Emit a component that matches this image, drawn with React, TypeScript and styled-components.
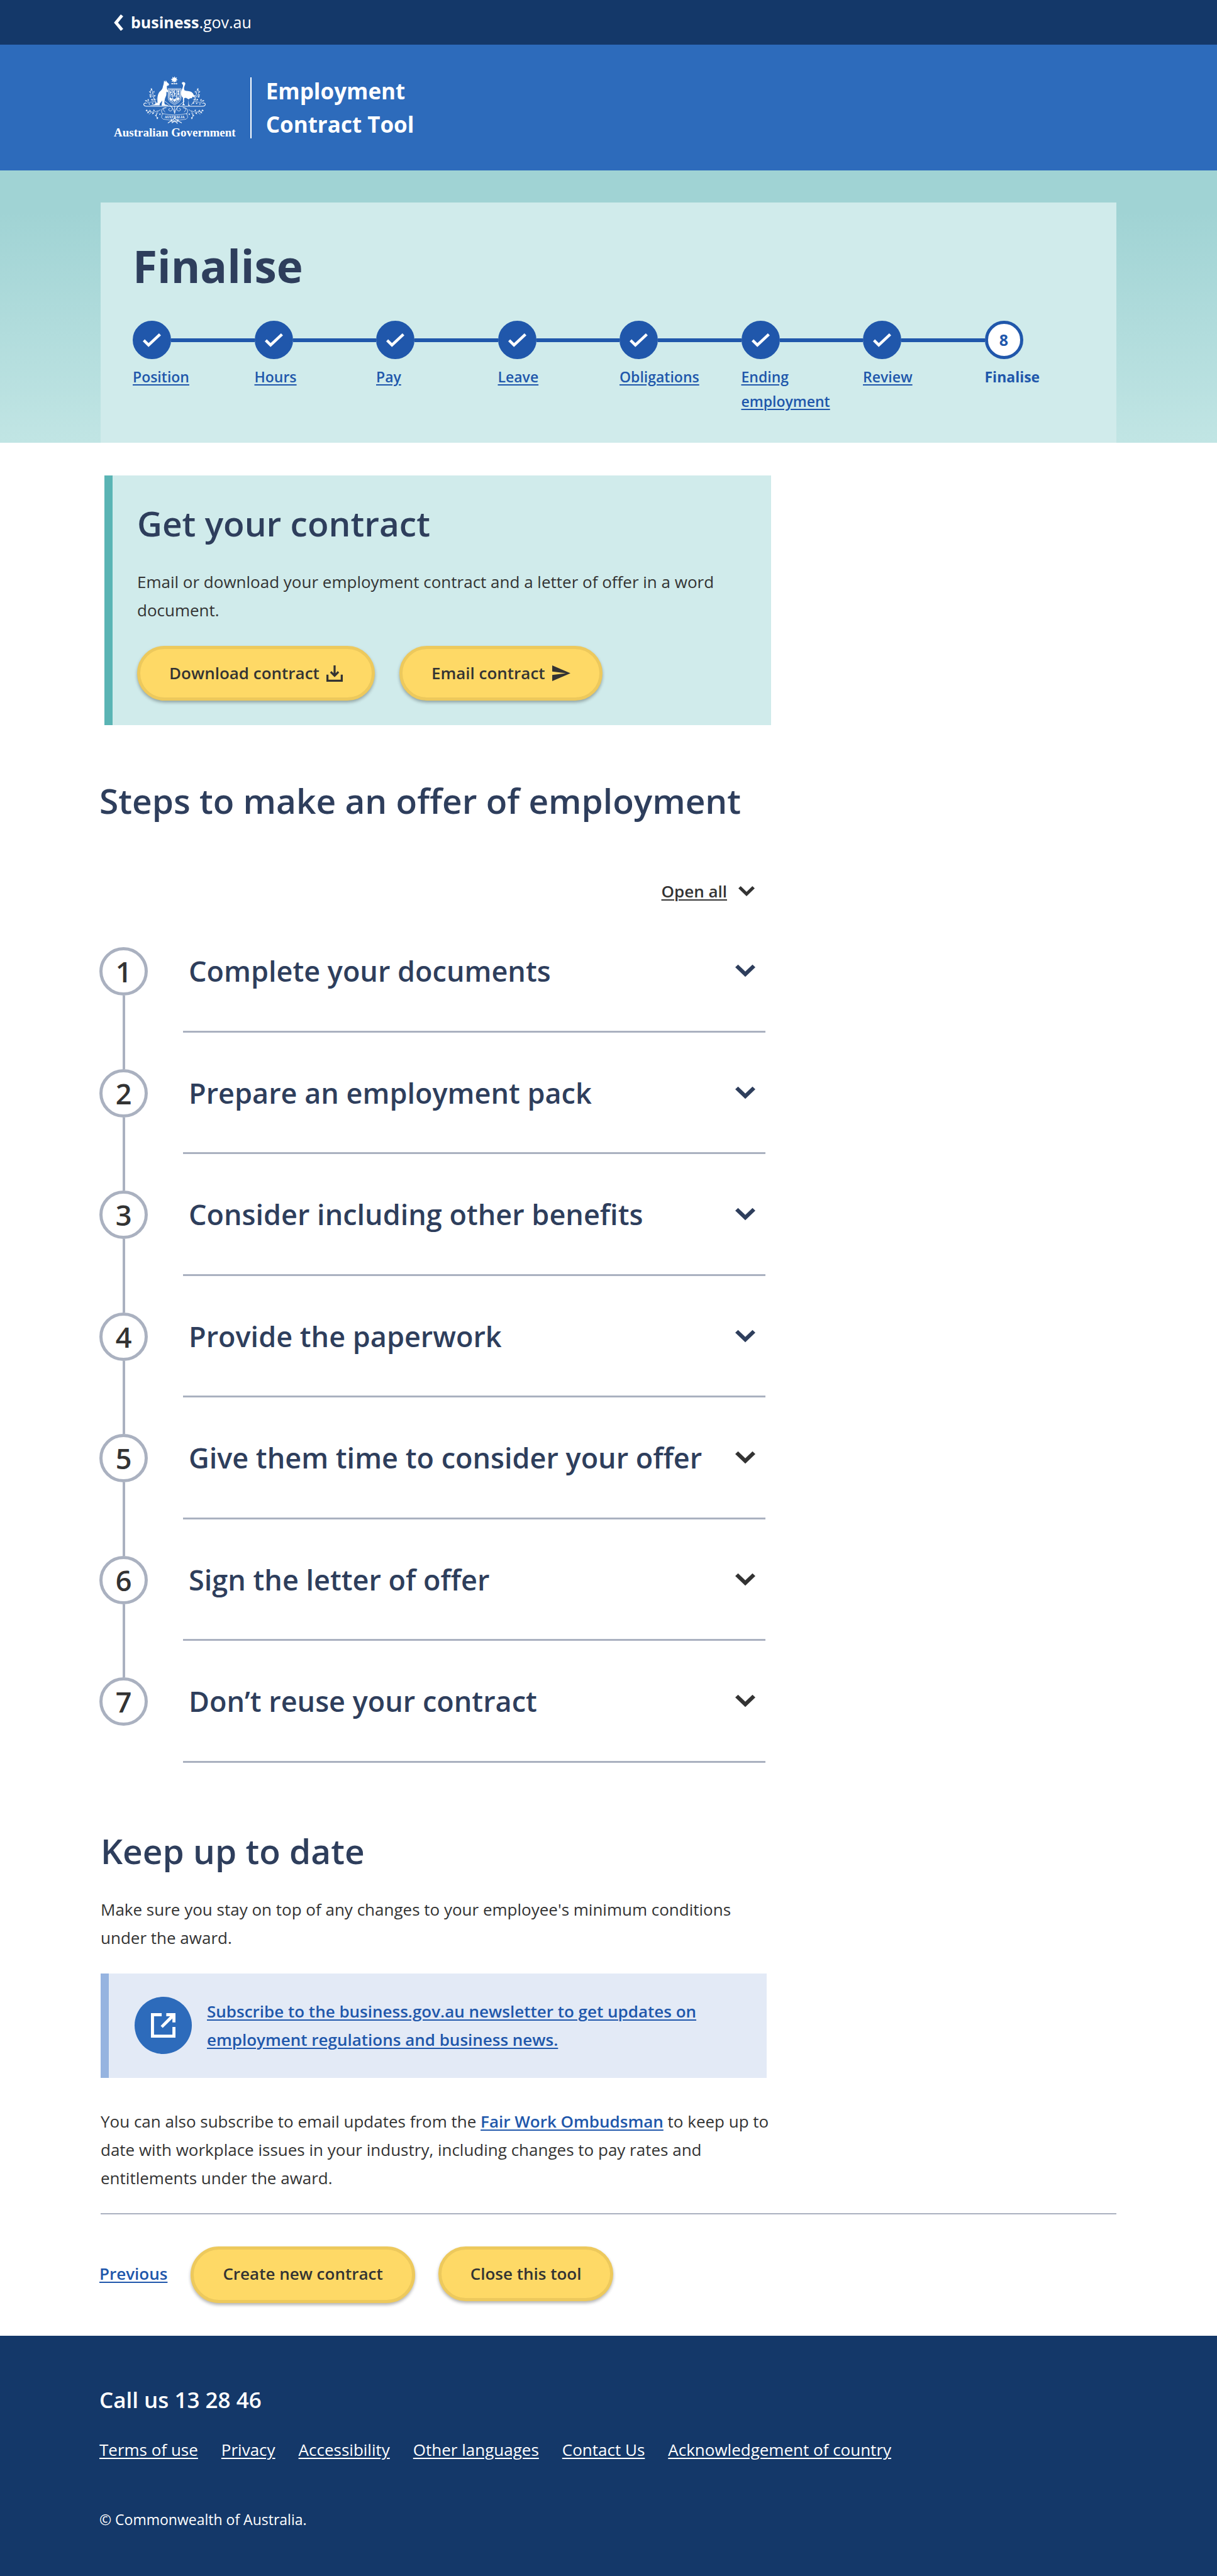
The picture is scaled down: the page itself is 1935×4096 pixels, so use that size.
import React, { useState } from "react";
import styled, { createGlobalStyle, css } from "styled-components";

const c = {
  navy: "#143869",
  blue: "#2d6bbb",
  link: "#2057ab",
  heading: "#2e3e5c",
  text: "#333333",
  mint: "#d0ebeb",
  teal: "#5ab4b4",
  grey: "#aab1c0",
  yellow: "#fed966",
  yellowEdge: "#edc95c",
  sky: "#e3eaf6",
  skyEdge: "#96b4e0",
};

const Global = createGlobalStyle`
  *, *::before, *::after { box-sizing: border-box; }
  body {
    margin: 0;
    background: #ffffff;
    color: ${c.text};
    font-family: "Open Sans", "Noto Sans", sans-serif;
    font-size: 26px;
    line-height: 45px;
  }
  h1, h2, p, ol, ul { margin: 0; padding: 0; }
  ol, ul { list-style: none; }
  button { font: inherit; color: inherit; cursor: pointer; }
  svg { display: block; flex: none; }
`;

const underline = css`
  text-decoration: underline;
  text-decoration-thickness: 2px;
  text-underline-offset: 3px;
`;

/* Header */

const TopBar = styled.nav`
  background: ${c.navy};
  height: 71px;
  padding: 0 181px;
  display: flex;
  align-items: center;
`;

const HomeLink = styled.a`
  display: flex;
  align-items: center;
  gap: 12px;
  color: #ffffff;
  font-size: 25px;
  text-decoration: none;
  strong { font-weight: 700; }
`;

const Banner = styled.header`
  background: ${c.blue};
  height: 200px;
  padding: 0 181px;
  display: flex;
  align-items: center;
  color: #ffffff;
`;

const Logo = styled.div`
  display: flex;
  flex-direction: column;
  align-items: center;
  font-family: "Liberation Serif", serif;
  font-weight: 700;
  font-size: 19px;
  line-height: 25px;
  white-space: nowrap;
`;

const Divider = styled.div`
  width: 2px;
  height: 97px;
  margin: 0 23px;
  background: #ffffff;
`;

const ToolName = styled.p`
  font-size: 35px;
  line-height: 53px;
  font-weight: 700;
`;

/* Progress */

const Hero = styled.section`
  padding: 51px 160px 0;
  background: linear-gradient(180deg, #a0d3d4 0%, #a0d3d4 15%, #c1e5e4 100%);
`;

const Panel = styled.div`
  background: ${c.mint};
  padding: 52px 16px 46px 51px;
`;

const PageTitle = styled.h1`
  color: ${c.heading};
  font-size: 71px;
  line-height: 97px;
  font-weight: 700;
`;

const Progress = styled.ol`
  display: grid;
  grid-template-columns: repeat(8, 1fr);
  margin-top: 39px;
`;

const ProgressItem = styled.li`
  display: flex;
  flex-direction: column;
  gap: 9px;
  color: ${c.link};
  font-size: 23px;
  line-height: 39px;
`;

const Track = styled.div`
  display: flex;
  align-items: center;
  &::after {
    content: "";
    flex: 1;
    height: 6px;
    background: ${c.link};
  }
  li:last-child > &::after { display: none; }
`;

const Dot = styled.span<{ $current?: boolean }>`
  width: 61px;
  height: 61px;
  border-radius: 50%;
  border: 5px solid ${c.link};
  background: ${(p) => (p.$current ? "#ffffff" : c.link)};
  display: flex;
  align-items: center;
  justify-content: center;
  font-size: 25px;
  font-weight: 700;
`;

const ProgressLink = styled.a`
  ${underline}
  width: min-content;
  color: inherit;
  font-weight: 600;
`;

const CurrentLabel = styled.span`
  font-weight: 700;
`;

/* Content */

const Main = styled.main`
  padding: 52px 160px 52px 158px;
`;

const Column = styled.div`
  max-width: 1068px;
`;

const Heading = styled.h2`
  color: ${c.heading};
  font-size: 55px;
  line-height: 74px;
  font-weight: 600;
`;

const Card = styled.section`
  margin-left: 8px;
  padding: 39px;
  background: ${c.mint};
  border-left: 13px solid ${c.teal};
`;

const Lead = styled.p`
  margin: 34px 0;
`;

const ButtonRow = styled.div`
  display: flex;
  gap: 39px;
`;

const Pill = styled.button<{ $tall?: boolean }>`
  display: flex;
  align-items: center;
  gap: 11px;
  padding: 16px 46px ${(p) => (p.$tall ? 19 : 16)}px;
  border: 5px solid ${c.yellowEdge};
  border-radius: 45px;
  background: ${c.yellow};
  box-shadow: 0 3px 5px rgba(0, 0, 0, 0.3);
  font-weight: 600;
`;

const StepsSection = styled.section`
  margin-top: 83px;
  width: 1059px;
  max-width: 100%;
`;

const OpenAll = styled.button`
  display: flex;
  align-items: center;
  gap: 18px;
  margin: 85px 17px 8px auto;
  padding: 0;
  border: 0;
  background: none;
  font-weight: 600;
  span { ${underline} }
`;

const StepList = styled.ol`
  display: grid;
  grid-auto-rows: 1fr;
  min-height: 1355px;
`;

const Step = styled.li`
  display: grid;
  grid-template-columns: 77px 1fr;
  column-gap: 56px;
`;

const Rail = styled.div`
  display: flex;
  flex-direction: column;
  align-items: center;
  &::before, &::after {
    content: "";
    width: 4px;
    background: ${c.grey};
  }
  &::before { height: 58px; }
  &::after { flex: 1; }
  li:first-child > &::before, li:last-child > &::after { background: none; }
`;

const StepNumber = styled.span`
  width: 77px;
  height: 77px;
  border: 5px solid ${c.grey};
  border-radius: 50%;
  display: flex;
  align-items: center;
  justify-content: center;
  font-size: 45px;
  font-weight: 600;
`;

const StepButton = styled.button<{ $arrow: string }>`
  display: flex;
  align-items: flex-start;
  justify-content: space-between;
  padding: 58px 16px 0 9px;
  border: 0;
  border-bottom: 3px solid ${c.grey};
  background: none;
  text-align: left;
  font-size: 45px;
  line-height: 75px;
  font-weight: 600;
  color: ${c.heading};
  svg { height: 75px; color: ${(p) => p.$arrow}; }
`;

const KeepSection = styled.section`
  margin: 103px 0 0 2px;
`;

const Callout = styled.div`
  display: flex;
  align-items: center;
  gap: 24px;
  max-width: 1059px;
  padding: 37px 100px 38px 41px;
  background: ${c.sky};
  border-left: 13px solid ${c.skyEdge};
`;

const RoundIcon = styled.span`
  flex: none;
  display: flex;
  align-items: center;
  justify-content: center;
  width: 91px;
  height: 91px;
  border-radius: 50%;
  background: ${c.blue};
  color: #ffffff;
`;

const TextLink = styled.a`
  ${underline}
  color: ${c.link};
  font-weight: 600;
`;

const AlsoText = styled.p`
  margin-top: 47px;
`;

const Rule = styled.hr`
  height: 2px;
  margin: 33px 0 51px 2px;
  border: 0;
  background: ${c.grey};
`;

const Actions = styled.div`
  display: flex;
  align-items: flex-start;
  gap: 37px;
`;

const Previous = styled(TextLink)`
  padding: 21px 0;
`;

/* Footer */

const Footer = styled.footer`
  padding: 78px 158px 70px;
  background: ${c.navy};
  color: #ffffff;
`;

const Phone = styled.p`
  font-size: 35px;
  line-height: 48px;
  font-weight: 600;
`;

const FooterLinks = styled.ul`
  display: flex;
  flex-wrap: wrap;
  gap: 37px;
  margin: 33px 0 69px;
  a { ${underline} color: inherit; }
`;

const Copyright = styled.p`
  font-size: 23px;
  line-height: 39px;
`;

const Chevron = ({ width }: { width: number }) => (
  <svg width={width} viewBox="0 0 12 7.400" fill="currentColor">
    <path d="M1.700 0 6 4.200 10.300 0 12 1.600 6 7.400 0 1.600Z" />
  </svg>
);

const Tick = () => (
  <svg width="29" height="22" viewBox="0 0 29 22" fill="none" stroke="#ffffff" strokeWidth="4.500">
    <path d="M1.600 11.200 9.200 18.600 27.400 1.700" />
  </svg>
);

const DownloadIcon = () => (
  <svg width="26" height="26" viewBox="0 0 32 32" fill="none" stroke="currentColor" strokeWidth="4">
    <path d="M2 18V30H30V18M16 0V19M8.400 12.600 16 20.200 23.600 12.600" />
  </svg>
);

const SendIcon = () => (
  <svg width="29" height="25" viewBox="0 0 36 31" fill="currentColor">
    <path d="M0 0 36 15.500 0 31V19L27 15.500 0 12Z" />
  </svg>
);

const ExternalIcon = () => (
  <svg width="39" height="39" viewBox="0 0 48 48" fill="currentColor">
    <path d="M0 0H21V6H6V42H42V27H48V48H0ZM30 0H48V18H42V10.500L23 29 19 25 37.500 6H30Z" />
  </svg>
);

const Leaves = () => (
  <g>
    <path
      d="M300 235C285 215 272 195 268 160M285 215C262 212 248 222 236 222M275 190C262 182 255 172 256 145M270 170 262 135M300 268C270 285 250 270 228 270M315 262C290 275 280 290 298 318M262 276 246 290M290 200 272 208M245 215 224 210M300 280 286 298"
      fill="none"
      strokeWidth="2.500"
    />
    <path
      d="M257 133l8 12-6 5zM246 152l10 5-4 6zM248 172l12 2-6 8zM271 158l7-8 0 12zM274 178l12-2-6 10zM250 180l14 6-10 5zM222 208l12-2-3 8zM240 198l8 10-10 1zM258 205l8-8 4 12zM272 196l10 2-6 8zM226 266l10-5 0 9zM234 284l8-12 5 8zM250 262l8 8-9 4zM264 290l6-13 6 8zM272 262l10 3-8 7zM280 298l10-6 2 9zM292 318l2-14 8 7zM306 290l8-8 0 12zM244 226l10 0-6 8zM262 222l12 0-7 8zM280 224l8-6 4 10z"
      stroke="none"
    />
  </g>
);

const Crest = () => (
  <svg width="101" height="78" viewBox="210 60 375 290" fill="#ffffff" stroke="#ffffff">
    <path
      stroke="none"
      d="M398 65l4 10 10-4-4 10 9 5-10 4 2 10-9-5-5 9-4-10-10 4 3-10-9-6 11-3-1-11 9 6z"
    />
    <path d="M379 109H416" fill="none" strokeWidth="6" strokeDasharray="9 3" />
    {/* kangaroo */}
    <path
      stroke="none"
      d="M336 90l8 9 2-11 8 13c7 4 12 9 11 15-3 6-10 3-13 7l1 17 7 12-2 7-8-3-1 20-8 21-4 22 3 12 15 4 9 3H321l4-30-14 17-2 12H250l28-6 19-10-1-20c1-22 6-40 18-49 10-8 14-18 15-28l4-12z"
    />
    {/* emu */}
    <path
      stroke="none"
      d="M440 106c3-9 14-9 19-3 4 5 2 9-2 18-4 10-5 19 0 27 12 5 28 2 39 9 14 9 16 20 22 37l-12-9-7 10-10 0-8 6 1 32 9 5H478l3-37-16-9-10 2-3 32 8 10H442l6-9-1-36c-8-7-13-18-11-31 2-18 15-30 11-44z"
    />
    {/* shield */}
    <g fill="none" strokeWidth="3">
      <path d="M360 138H436V196Q432 218 398 232Q364 218 360 196Z" />
      <path d="M366 144H430V194Q426 212 398 224Q370 212 366 194ZM366 182H430M387 144V216M409 144V216" />
    </g>
    <path
      stroke="none"
      d="M369 148h4v10h9v5h-9v14h-4zM377 148h6v6h-6zM377 168h6v8h-6zM392 148h11l-8 10 9 8-5 12h-6l3-10-6-8zM413 148h13l-4 12 4 14h-13l4-12zM369 190h6l4 8 5-8v14l-7 8-8-12zM391 196l8 5 7-10v18l-8 8-8-8zM412 189h12l2 10-10 11-5-8z"
    />
    {/* base and foliage */}
    <g fill="none" strokeWidth="4">
      <path d="M232 226C224 218 212 226 217 236C221 245 232 242 240 242H555C565 242 574 245 578 236C583 226 571 218 563 226" />
      <path
        d="M398 285C394 262 380 240 340 212M398 285C402 262 416 240 456 212M398 285V240M372 238C390 248 388 270 372 270C360 270 360 252 372 256M424 238C406 248 408 270 424 270C436 270 436 252 424 256M350 250C330 250 325 262 342 276M446 250C466 250 471 262 454 276M330 290C312 270 322 250 345 252M466 290C484 270 474 250 451 252"
        strokeWidth="3"
      />
      <path d="M326 285Q398 302 470 285L476 308 466 318Q398 332 330 318L320 308Z" strokeWidth="2.500" />
      <path d="M358 341C372 332 385 326 398 312C411 326 424 332 440 341M382 342C388 326 410 326 414 346M380 316C370 330 392 342 398 330C404 342 426 330 416 316" strokeWidth="4" />
    </g>
    <text
      x="398"
      y="311"
      textAnchor="middle"
      stroke="none"
      fontFamily="Liberation Serif, serif"
      fontWeight="700"
      fontSize="20"
    >
      AUSTRALIA
    </text>
    <Leaves />
    <g transform="translate(796 0) scale(-1 1)">
      <Leaves />
    </g>
  </svg>
);

const stages = ["Position", "Hours", "Pay", "Leave", "Obligations", "Ending employment", "Review"];

const steps = [
  "Complete your documents",
  "Prepare an employment pack",
  "Consider including other benefits",
  "Provide the paperwork",
  "Give them time to consider your offer",
  "Sign the letter of offer",
  "Don’t reuse your contract",
];

const footerLinks = [
  "Terms of use",
  "Privacy",
  "Accessibility",
  "Other languages",
  "Contact Us",
  "Acknowledgement of country",
];

export default function App() {
  const [open, setOpen] = useState<number[]>([]);
  const toggle = (i: number) =>
    setOpen((o) => (o.includes(i) ? o.filter((x) => x !== i) : [...o, i]));
  const toggleAll = () => setOpen((o) => (o.length === steps.length ? [] : steps.map((_, i) => i)));

  return (
    <>
      <Global />
      <TopBar>
        <HomeLink href="#">
          <svg width="15" height="26" viewBox="0 0 15 26" fill="none" stroke="currentColor" strokeWidth="5">
            <path d="M13 1.500 3.500 13 13 24.500" />
          </svg>
          <span>
            <strong>business</strong>.gov.au
          </span>
        </HomeLink>
      </TopBar>
      <Banner>
        <Logo>
          <Crest />
          <span>Australian Government</span>
        </Logo>
        <Divider />
        <ToolName>
          Employment
          <br />
          Contract Tool
        </ToolName>
      </Banner>

      <Hero>
        <Panel>
          <PageTitle>Finalise</PageTitle>
          <Progress>
            {stages.map((s) => (
              <ProgressItem key={s}>
                <Track>
                  <Dot>
                    <Tick />
                  </Dot>
                </Track>
                <ProgressLink href="#">{s}</ProgressLink>
              </ProgressItem>
            ))}
            <ProgressItem aria-current="step">
              <Track>
                <Dot $current>8</Dot>
              </Track>
              <CurrentLabel>Finalise</CurrentLabel>
            </ProgressItem>
          </Progress>
        </Panel>
      </Hero>

      <Main>
        <Column>
          <Card>
            <Heading>Get your contract</Heading>
            <Lead>
              Email or download your employment contract and a letter of offer in a word document.
            </Lead>
            <ButtonRow>
              <Pill type="button">
                Download contract
                <DownloadIcon />
              </Pill>
              <Pill type="button">
                Email contract
                <SendIcon />
              </Pill>
            </ButtonRow>
          </Card>

          <StepsSection>
            <Heading>Steps to make an offer of employment</Heading>
            <OpenAll type="button" onClick={toggleAll}>
              <span>Open all</span>
              <Chevron width={26} />
            </OpenAll>
            <StepList>
              {steps.map((s, i) => (
                <Step key={s}>
                  <Rail>
                    <StepNumber>{i + 1}</StepNumber>
                  </Rail>
                  <StepButton
                    type="button"
                    $arrow={i < 4 ? c.heading : c.text}
                    aria-expanded={open.includes(i)}
                    onClick={() => toggle(i)}
                  >
                    {s}
                    <Chevron width={32} />
                  </StepButton>
                </Step>
              ))}
            </StepList>
          </StepsSection>

          <KeepSection>
            <Heading>Keep up to date</Heading>
            <Lead>
              Make sure you stay on top of any changes to your employee's minimum conditions under
              the award.
            </Lead>
            <Callout>
              <RoundIcon>
                <ExternalIcon />
              </RoundIcon>
              <TextLink href="#">
                Subscribe to the business.gov.au newsletter to get updates on employment regulations
                and business news.
              </TextLink>
            </Callout>
            <AlsoText>
              You can also subscribe to email updates from the{" "}
              <TextLink href="#">Fair Work Ombudsman</TextLink> to keep up to date with workplace
              issues in your industry, including changes to pay rates and entitlements under the
              award.
            </AlsoText>
          </KeepSection>
        </Column>
        <Rule />
        <Actions>
          <Previous href="#">Previous</Previous>
          <Pill type="button" $tall>
            Create new contract
          </Pill>
          <Pill type="button">Close this tool</Pill>
        </Actions>
      </Main>

      <Footer>
        <Phone>Call us 13 28 46</Phone>
        <FooterLinks>
          {footerLinks.map((l) => (
            <li key={l}>
              <a href="#">{l}</a>
            </li>
          ))}
        </FooterLinks>
        <Copyright>© Commonwealth of Australia.</Copyright>
      </Footer>
    </>
  );
}
